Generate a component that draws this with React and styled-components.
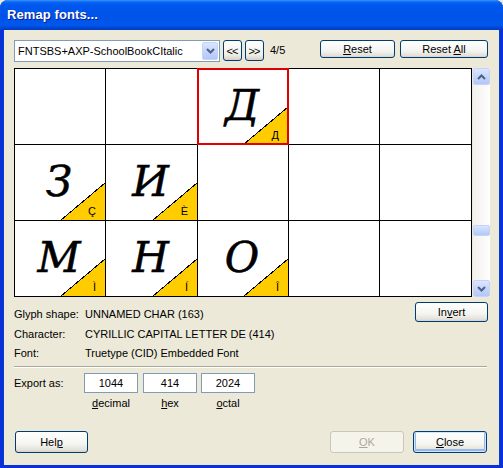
import React from 'react';
import styled, { createGlobalStyle, css } from 'styled-components';

const GlobalStyle = createGlobalStyle`
  html, body {
    margin: 0;
    padding: 0;
    background: #ece9d8;
  }
  body {
    font-family: "Liberation Sans", Arial, sans-serif;
    font-size: 11px;
    color: #000;
  }
`;

const cells = [
  null, null, { g: 'Д', s: 'Д', selected: true }, null, null,
  { g: 'З', s: 'Ç' }, { g: 'И', s: 'È' }, null, null, null,
  { g: 'М', s: 'Ì' }, { g: 'Н', s: 'Í' }, { g: 'О', s: 'Î' }, null, null,
];

export default function App() {
  return (
    <>
      <GlobalStyle />
      <Window>
        <TitleBar>
          <Title>Remap fonts...</Title>
        </TitleBar>
        <Body>
          <Toolbar>
            <Select>
              <SelectText>FNTSBS+AXP-SchoolBookCItalic</SelectText>
              <DropButton>
                <svg width="9" height="6" viewBox="0 0 9 6">
                  <path d="M1 1 L4.5 4.5 L8 1" fill="none" stroke="#4d6185" strokeWidth="2" />
                </svg>
              </DropButton>
            </Select>
            <NavButton>&lt;&lt;</NavButton>
            <NavButton>&gt;&gt;</NavButton>
            <Counter>4/5</Counter>
            <Button $w={75} $h={18} $ml="auto"><span><u>R</u>eset</span></Button>
            <Button $w={88} $h={18} $ml="5px"><span>Reset <u>A</u>ll</span></Button>
          </Toolbar>

          <GridArea>
            <Grid>
              {cells.map((c, i) => (
                <Cell key={i} $selected={c && c.selected}>
                  {c && <Glyph>{c.g}</Glyph>}
                  {c && (
                    <Corner>
                      <svg width="44" height="37" viewBox="0 0 44 37" shapeRendering="crispEdges">
                        <polygon points="0,37 44,0 44,37" fill="#ffcc00" />
                        <line x1="0" y1="37" x2="44" y2="0" stroke="#000" strokeWidth="1" />
                      </svg>
                      <SmallChar>{c.s}</SmallChar>
                    </Corner>
                  )}
                </Cell>
              ))}
            </Grid>
            <Scrollbar>
              <ScrollButton>
                <svg width="9" height="6" viewBox="0 0 9 6">
                  <path d="M1 5 L4.5 1.5 L8 5" fill="none" stroke="#4d6185" strokeWidth="2" />
                </svg>
              </ScrollButton>
              <Track>
                <Thumb />
              </Track>
              <ScrollButton>
                <svg width="9" height="6" viewBox="0 0 9 6">
                  <path d="M1 1 L4.5 4.5 L8 1" fill="none" stroke="#4d6185" strokeWidth="2" />
                </svg>
              </ScrollButton>
            </Scrollbar>
          </GridArea>

          <InfoArea>
            <InfoList>
              <InfoRow><Label>Glyph shape:</Label><Value>UNNAMED CHAR (163)</Value></InfoRow>
              <InfoRow><Label>Character:</Label><Value>CYRILLIC CAPITAL LETTER DE (414)</Value></InfoRow>
              <InfoRow><Label>Font:</Label><Value>Truetype (CID) Embedded Font</Value></InfoRow>
            </InfoList>
            <Button $w={73} $h={20} $mt="-1px"><span>In<u>v</u>ert</span></Button>
          </InfoArea>

          <Separator />

          <ExportArea>
            <Label>Export as:</Label>
            <ExportGroup>
              <Field>
                <Input>1044</Input>
                <FieldLabel><u>d</u>ecimal</FieldLabel>
              </Field>
              <Field $gap={5}>
                <Input>414</Input>
                <FieldLabel><u>h</u>ex</FieldLabel>
              </Field>
              <Field $gap={4}>
                <Input>2024</Input>
                <FieldLabel><u>o</u>ctal</FieldLabel>
              </Field>
            </ExportGroup>
          </ExportArea>

          <Footer>
            <Button $w={73} $h={22} $ml="1px"><span>Hel<u>p</u></span></Button>
            <Button $w={74} $h={22} $ml="auto" disabled><span><u>O</u>K</span></Button>
            <Button $w={74} $h={22} $ml="9px" $default><span><u>C</u>lose</span></Button>
          </Footer>
        </Body>
      </Window>
    </>
  );
}

const Window = styled.div`
  width: 503px;
  height: 468px;
  box-sizing: border-box;
  display: flex;
  flex-direction: column;
  background: #0831d9;
  border-radius: 8px 8px 0 0;
  overflow: hidden;
`;

const TitleBar = styled.div`
  height: 30px;
  flex: none;
  display: flex;
  align-items: center;
  padding: 0 0 2px 7px;
  box-sizing: border-box;
  background: linear-gradient(
    to bottom,
    #3d95ff 0px,
    #0a66f5 2px,
    #0058ee 5px,
    #0053e8 14px,
    #0055ea 22px,
    #0058f0 25px,
    #0046d0 28px,
    #003dbd 30px
  );
`;

const Title = styled.div`
  font-family: "Liberation Sans", Arial, sans-serif;
  font-weight: bold;
  font-size: 13px;
  color: #fff;
  text-shadow: 1px 1px 0 #0a1e8c;
  letter-spacing: 0.1px;
`;

const Body = styled.div`
  flex: 1;
  margin: 0 3px 3px 3px;
  background: #ece9d8;
  padding: 10px 11px 12px 10px;
  display: flex;
  flex-direction: column;
  border-left: 1px solid #0b3cc7;
  border-right: 1px solid #0b3cc7;
`;

const Toolbar = styled.div`
  display: flex;
  align-items: flex-start;
  height: 21px;
`;

const Select = styled.div`
  width: 206px;
  height: 22px;
  box-sizing: border-box;
  border: 1px solid #7f9db9;
  background: #fff;
  display: flex;
  align-items: center;
  padding: 0 1px 0 3px;
`;

const SelectText = styled.div`
  flex: 1;
  font-size: 11px;
  white-space: nowrap;
`;

const xpBlueButton = css`
  box-sizing: border-box;
  background: linear-gradient(to bottom, #dce6fd, #c1d3fb 60%, #b4c8f6);
  border: 1px solid #c3d3fd;
  border-radius: 2px;
  display: flex;
  align-items: center;
  justify-content: center;
`;

const DropButton = styled.div`
  ${xpBlueButton};
  width: 16px;
  height: 18px;
`;

const NavButton = styled.div`
  width: 19px;
  height: 21px;
  box-sizing: border-box;
  margin-left: 3px;
  &:first-of-type {
    margin-left: 6px;
  }
  border: 1px solid #003c74;
  border-radius: 3px;
  background: linear-gradient(to bottom, #fff, #f0f0ea 70%, #d6d0c5);
  display: flex;
  align-items: center;
  justify-content: center;
  font-size: 11px;
  letter-spacing: -1px;
  padding-right: 1px;
`;

const Counter = styled.div`
  margin-left: 6px;
  line-height: 21px;
  font-size: 11px;
`;

const Button = styled.div`
  width: ${p => p.$w}px;
  height: ${p => p.$h}px;
  margin-left: ${p => p.$ml || '0'};
  margin-top: ${p => p.$mt || '0'};
  flex: none;
  box-sizing: border-box;
  border: 1px solid #003c74;
  border-radius: 3px;
  background: linear-gradient(to bottom, #ffffff, #f4f4f0 60%, #e3e1da 90%, #d6d0c5);
  display: flex;
  align-items: center;
  justify-content: center;
  font-size: 11px;
  color: #000;
  white-space: pre;
  ${p => p.$default && css`
    box-shadow: inset 0 0 0 1px #cee7ff, inset 0 -1px 0 2px #98b8ea;
  `}
  ${p => p.disabled && css`
    border-color: #c9c7ba;
    background: #f5f4ea;
    color: #aca899;
  `}
`;

const GridArea = styled.div`
  display: flex;
  margin-top: 7px;
`;

const Grid = styled.div`
  width: 458px;
  display: grid;
  grid-template-columns: 90px 91px 90px 90px 91px;
  grid-auto-rows: 75px;
  gap: 1px;
  padding: 1px;
  box-sizing: border-box;
  background: #000;
`;

const Cell = styled.div`
  position: relative;
  background: #fff;
  display: flex;
  align-items: center;
  justify-content: center;
  ${p => p.$selected && css`
    &::after {
      content: '';
      position: absolute;
      inset: -1px;
      border: 2px solid #e00000;
    }
  `}
`;

const Glyph = styled.div`
  font-family: "DejaVu Serif", "Liberation Serif", serif;
  font-style: italic;
  font-size: 42px;
  line-height: 1;
  margin-top: -2px;
  margin-left: -2px;
  -webkit-text-stroke: 0.6px #000;
`;

const Corner = styled.div`
  position: absolute;
  right: 0;
  bottom: 0;
  width: 44px;
  height: 37px;
  svg {
    display: block;
  }
`;

const SmallChar = styled.div`
  position: absolute;
  right: 9px;
  bottom: 2px;
  font-size: 11px;
  line-height: 13px;
`;

const Scrollbar = styled.div`
  width: 17px;
  margin-left: 1px;
  display: flex;
  flex-direction: column;
  background: linear-gradient(to right, #f3f1ec, #fefefe);
`;

const ScrollButton = styled.div`
  ${xpBlueButton};
  width: 17px;
  height: 17px;
`;

const Track = styled.div`
  flex: 1;
  display: flex;
  flex-direction: column;
  justify-content: flex-end;
  padding-bottom: 44px;
`;

const Thumb = styled.div`
  ${xpBlueButton};
  height: 11px;
`;

const InfoArea = styled.div`
  display: flex;
  align-items: flex-start;
  margin-top: 6px;
`;

const InfoList = styled.div`
  flex: 1;
  padding-top: 1.5px;
`;

const InfoRow = styled.div`
  display: flex;
  height: 19.5px;
  align-items: center;
`;

const Label = styled.div`
  width: 71px;
  flex: none;
  font-size: 11px;
`;

const Value = styled.div`
  font-size: 11px;
`;

const Separator = styled.div`
  height: 1px;
  border-top: 1px solid #aca899;
  background: #fff;
  margin-top: 3px;
  margin-right: 1px;
`;

const ExportArea = styled.div`
  display: flex;
  align-items: flex-start;
  margin-top: 5px;
  ${Label} {
    line-height: 20px;
  }
`;

const ExportGroup = styled.div`
  display: flex;
  margin-left: -1px;
`;

const Field = styled.div`
  display: flex;
  flex-direction: column;
  align-items: center;
  margin-left: ${p => (p.$gap || 0)}px;
`;

const Input = styled.div`
  width: 54px;
  height: 20px;
  box-sizing: border-box;
  border: 1px solid #7f9db9;
  background: #fff;
  display: flex;
  align-items: center;
  justify-content: center;
  font-size: 11px;
`;

const FieldLabel = styled.div`
  margin-top: 3px;
  font-size: 11px;
  line-height: 14px;
`;

const Footer = styled.div`
  margin-top: auto;
  display: flex;
  align-items: center;
  padding-right: 1px;
`;
